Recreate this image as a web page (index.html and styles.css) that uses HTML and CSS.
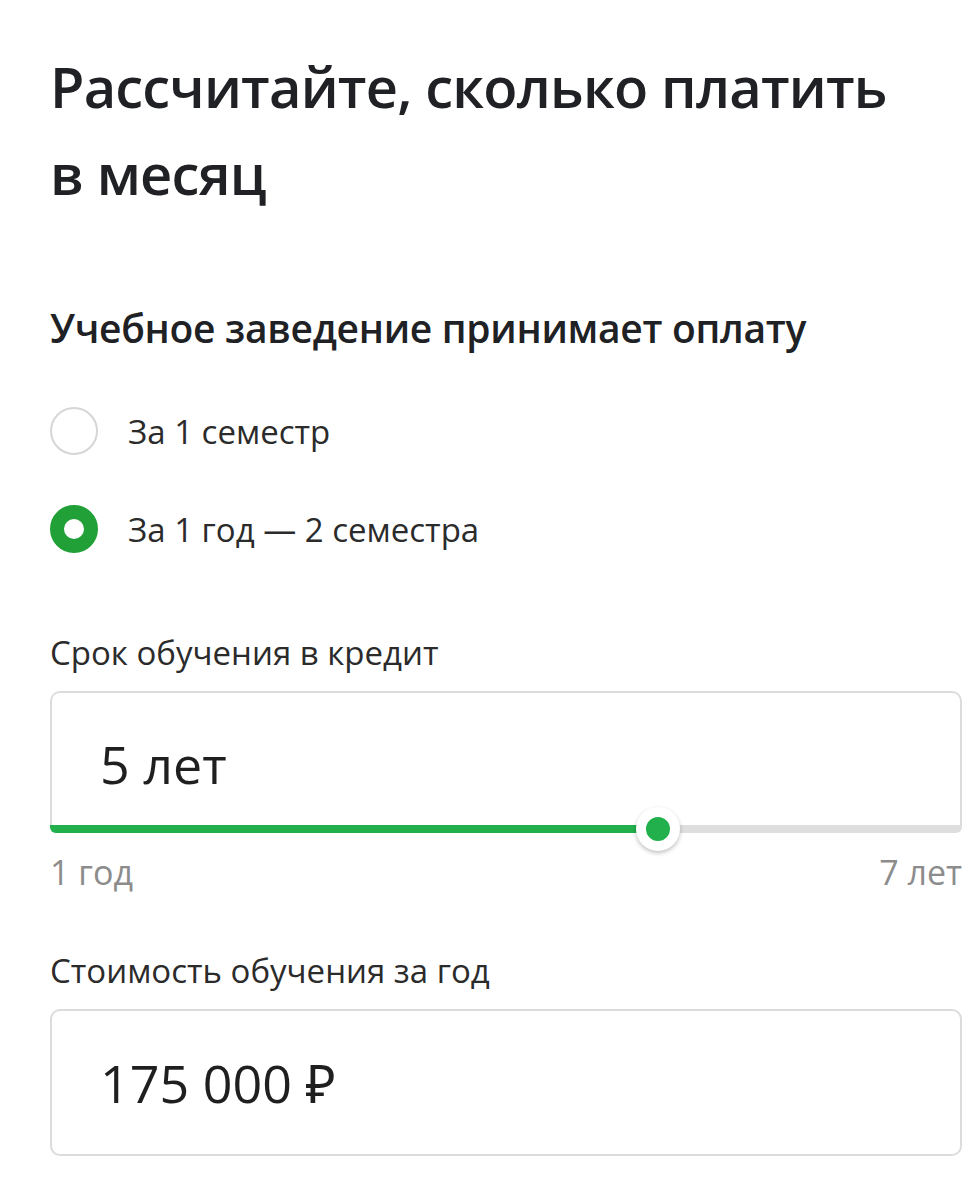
FILE: index.html
```html
<!DOCTYPE html>
<html lang="ru">
<head>
    <meta charset="UTF-8">
    <meta name="viewport" content="width=device-width, initial-scale=1.0">
    <title>Кредит на образование</title>
    <link rel="stylesheet" href="styles.css">
</head>
<body>
    <div class="calc">
        <h1>Рассчитайте, сколько платить в&nbsp;месяц</h1>

        <h2>Учебное заведение принимает оплату</h2>
        <div class="radio-group">
            <label class="radio">
                <span class="radio-mark"></span>
                <span class="radio-text">За 1 семестр</span>
            </label>
            <label class="radio checked">
                <span class="radio-mark"></span>
                <span class="radio-text">За 1 год — 2 семестра</span>
            </label>
        </div>

        <div class="field-label">Срок обучения в кредит</div>
        <div class="field with-slider">
            <div class="field-value">5 лет</div>
        </div>
        <div class="slider">
            <div class="slider-fill" style="width: 66.67%"></div>
            <div class="slider-thumb" style="left: 66.67%"></div>
        </div>
        <div class="slider-limits">
            <span>1 год</span>
            <span>7 лет</span>
        </div>

        <div class="field-label">Стоимость обучения за год</div>
        <div class="field">
            <div class="field-value">175 000 ₽</div>
        </div>
    </div>
</body>
</html>
```

FILE: styles.css
```css
body {
    margin: 0;
    font-family: 'Open Sans', 'Noto Sans', sans-serif;
    background-color: #fff;
    color: #202124;
}

.calc {
    padding: 43px 7px 40px 50px;
}

h1 {
    font-size: 56px;
    font-weight: 600;
    line-height: 87px;
    letter-spacing: -0.8px;
    margin: 0 0 84px;
}

h2 {
    font-size: 39px;
    font-weight: 600;
    margin: 0 0 53px;
    letter-spacing: -0.3px;
}

.radio-group {
    display: flex;
    flex-direction: column;
    gap: 50px;
    margin-bottom: 77px;
}

.radio {
    display: flex;
    align-items: center;
    gap: 30px;
}

.radio-mark {
    width: 48px;
    height: 48px;
    box-sizing: border-box;
    border: 2px solid #d6d6d6;
    border-radius: 50%;
    flex-shrink: 0;
}

.radio.checked .radio-mark {
    border: 14px solid #21a038;
}

.radio-text {
    font-size: 33px;
    color: #2b2b2b;
}

.field-label {
    font-size: 33px;
    color: #2b2b2b;
    margin-bottom: 16px;
}

.field {
    border: 2px solid #dcdcdc;
    border-radius: 10px;
    height: 143px;
    display: flex;
    align-items: center;
    padding-left: 48px;
}

.field.with-slider {
    border-bottom: none;
    border-radius: 10px 10px 0 0;
    height: 134px;
    box-sizing: border-box;
    padding-top: 8px;
}

.field-value {
    font-size: 52px;
    color: #1f1f1f;
}

.slider {
    position: relative;
    height: 8px;
    background-color: #dedede;
    border-radius: 0 0 6px 6px;
}

.slider-fill {
    height: 100%;
    background-color: #21b04b;
    border-radius: 0 0 0 6px;
}

.slider-thumb {
    position: absolute;
    top: 50%;
    width: 24px;
    height: 24px;
    margin: -22px 0 0 -22px;
    border: 10px solid #fff;
    border-radius: 50%;
    background-color: #21b04b;
    box-shadow: 0 2px 4px rgba(0, 0, 0, 0.25);
}

.slider-limits {
    display: flex;
    justify-content: space-between;
    font-size: 34px;
    color: #8c8c8c;
    margin: 16px 0 53px;
}
```
